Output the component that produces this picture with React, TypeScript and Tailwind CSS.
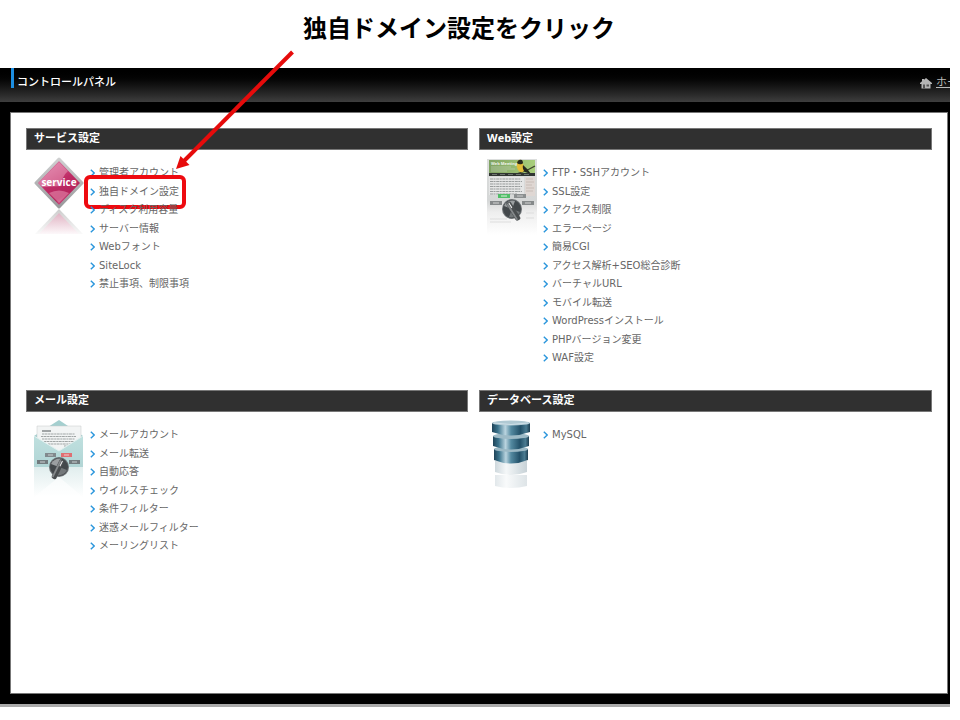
import React from 'react';

interface MenuSection {
  title: string;
  icon: React.ReactNode;
  items: string[];
  listHeight: string;
  highlighted?: string;
}

const Knob: React.FC<{ x: number; y: number; angle: number }> = ({ x, y, angle }) => (
  <g transform={`translate(${x} ${y})`}>
    <circle r="10" fill="#6b7073" />
    <circle r="9" fill="#43484b" />
    <path d="M-8 -3A9 9 0 0 1 3 -8L0 0Z" fill="#9b9fa1" />
    <path d="M8 3A9 9 0 0 1 -3 8L0 0Z" fill="#73787a" />
    <g transform={`rotate(${angle})`}>
      <rect x="-2.6" y="-8" width="5.2" height="21" rx="2" fill="#4a4e50" />
      <rect x="-2.2" y="-7" width="1.8" height="19" rx="0.9" fill="#85898b" />
      <path d="M0.5 -7V-1" stroke="#f3f3f3" strokeWidth="1" />
    </g>
  </g>
);

const ServiceIcon = () => (
  <svg className="block" width="50" height="80" viewBox="0 0 50 80" aria-hidden="true">
    <defs>
      <linearGradient id="svcPink" x1="0.2" y1="0.1" x2="0.7" y2="1">
        <stop offset="0" stopColor="#d8709c" />
        <stop offset="0.45" stopColor="#bf2c66" />
        <stop offset="0.75" stopColor="#b5245c" />
        <stop offset="1" stopColor="#dd6f9d" />
      </linearGradient>
      <linearGradient id="svcRim" x1="0" y1="0" x2="0" y2="1">
        <stop offset="0" stopColor="#cfd0d1" />
        <stop offset="1" stopColor="#98999b" />
      </linearGradient>
      <linearGradient id="svcFade" x1="0" y1="0" x2="0" y2="1">
        <stop offset="0" stopColor="#e0b3c3" />
        <stop offset="1" stopColor="#fdf8fa" />
      </linearGradient>
      <linearGradient id="svcRimFade" x1="0" y1="0" x2="0" y2="1">
        <stop offset="0" stopColor="#cccccc" />
        <stop offset="1" stopColor="#fafafa" />
      </linearGradient>
    </defs>
    <path d="M25 52L49 77H1Z" fill="url(#svcRimFade)" />
    <path d="M25 56L45 77H5Z" fill="url(#svcFade)" />
    <path d="M25 2L48 26L25 50L2 26Z" fill="url(#svcPink)" stroke="url(#svcRim)" strokeWidth="3" strokeLinejoin="round" />
    <path d="M25 5L34 14Q27 20 28 29L8 30L4 26Z" fill="#eda6c1" opacity="0.5" />
    <path d="M15 36L25 46L35 36Q25 31 15 36Z" fill="#f3aec8" opacity="0.45" />
    <text x="25" y="29" textAnchor="middle" fontFamily="Open Sans, sans-serif" fontSize="10" fontWeight="700" fill="#fff">service</text>
  </svg>
);

const WebIcon = () => (
  <svg className="block" width="50" height="80" viewBox="0 0 50 80" aria-hidden="true">
    <defs>
      <linearGradient id="webSheet" x1="0" y1="0" x2="0" y2="1">
        <stop offset="0" stopColor="#dcdedd" />
        <stop offset="0.55" stopColor="#d5d7d7" />
        <stop offset="0.7" stopColor="#eeeeee" />
        <stop offset="1" stopColor="#ffffff" />
      </linearGradient>
      <linearGradient id="webSky" x1="0" y1="0" x2="1" y2="0">
        <stop offset="0" stopColor="#7fa263" />
        <stop offset="1" stopColor="#a9cf7c" />
      </linearGradient>
    </defs>
    <rect x="0" y="2" width="50" height="76" fill="url(#webSheet)" />
    <rect x="2" y="3" width="46" height="14" fill="url(#webSky)" />
    <text x="4" y="8" fontFamily="Open Sans, sans-serif" fontSize="4" fontWeight="700" fill="#eff4ea">Web Meeting</text>
    <path d="M4 10H24M4 12H28M4 14H20" stroke="#b9ccab" strokeWidth="0.8" />
    <path d="M25 18Q36 16 48 9" fill="none" stroke="#40452d" strokeWidth="1.4" />
    <path d="M30 6Q31 2 34 3Q36 4 36 7Q39 11 37 14Q34 17 31 13Q29 10 30 6Z" fill="#e2bd3a" />
    <path d="M30 6Q31 2 35 3Q37 6 35 7Q32 8 30 6ZM36 8Q41 12 44 17L38 15Q35 12 36 8Z" fill="#26291f" />
    <rect x="2" y="16" width="46" height="3" fill="#303532" />
    <path d="M5 17.5H45" stroke="#8a908b" strokeWidth="0.7" strokeDasharray="5 3" />
    <rect x="2" y="20" width="35" height="18" fill="#e5e6e6" />
    <rect x="38" y="20" width="10" height="19" fill="#dfd7d3" />
    <path d="M3 22H34M3 24.5H35M3 27H33M3 29.5H35M3 32H34M3 34.5H35M3 37H30" stroke="#999d9d" strokeWidth="1" strokeDasharray="3 0.5 2 0.7" />
    <path d="M39 22H46M39 25H47M39 28H45M39 31H47M39 34H46" stroke="#c2b6b1" strokeWidth="0.8" />
    <rect x="11" y="37" width="12" height="4" fill="#50bd67" />
    <path d="M14 39H20" stroke="#dbf3df" />
    <rect x="27" y="37" width="12" height="4" fill="#8b8f90" />
    <path d="M30 39H36" stroke="#c9cbcb" />
    <rect x="3" y="44" width="12" height="4" fill="#85898a" />
    <path d="M6 46H12" stroke="#d3d4d4" />
    <rect x="35" y="44" width="12" height="4" fill="#85898a" />
    <path d="M38 46H44" stroke="#d3d4d4" />
    <path d="M3 62H20M3 65H24M39 56H47M39 61H47" stroke="#dddddd" />
    <Knob x={25} y={52} angle={-32} />
  </svg>
);

const MailIcon = () => (
  <svg className="block" width="50" height="80" viewBox="0 0 50 80" aria-hidden="true">
    <defs>
      <linearGradient id="mailFade" x1="0" y1="0" x2="0" y2="1">
        <stop offset="0" stopColor="#e1eeee" />
        <stop offset="1" stopColor="#ffffff" />
      </linearGradient>
      <linearGradient id="mailBody" x1="0" y1="0" x2="0" y2="1">
        <stop offset="0" stopColor="#bfe0df" />
        <stop offset="1" stopColor="#b1d5d5" />
      </linearGradient>
    </defs>
    <rect x="0" y="48" width="49" height="30" fill="url(#mailFade)" />
    <path d="M0 78L25 58L49 78" fill="#ffffff" opacity="0.6" />
    <path d="M0 17L25 1L49 17V48H0Z" fill="#a4cfcf" />
    <path d="M3 7H47V24L25 34L3 24Z" fill="#f2f4f4" stroke="#c6caca" strokeWidth="0.5" />
    <path d="M8 12H17" stroke="#4e5456" />
    <path d="M8 15H41M7 17.5H42M8 20H41M10 22.5H40M14 25H38M30 27H35" stroke="#a0a5a5" strokeWidth="1.1" strokeDasharray="2 0.5 3 0.6" />
    <path d="M0 17L25 32L49 17V48H0Z" fill="url(#mailBody)" />
    <path d="M0 17L25 32L49 17" fill="none" stroke="#e1f0ef" strokeWidth="1" />
    <rect x="11" y="34" width="11" height="4" fill="#818a8d" />
    <path d="M14 36H19" stroke="#cbd0d1" />
    <rect x="27" y="34" width="11" height="4" fill="#df6f72" />
    <path d="M30 36H35" stroke="#f4cccc" />
    <rect x="3" y="41" width="11" height="4" fill="#727b7e" />
    <path d="M6 43H11" stroke="#cbd0d1" />
    <rect x="35" y="41" width="11" height="4" fill="#727b7e" />
    <path d="M38 43H43" stroke="#cbd0d1" />
    <Knob x={25} y={48} angle={26} />
  </svg>
);

const DatabaseIcon = () => (
  <svg className="block" width="50" height="80" viewBox="0 0 50 80" aria-hidden="true">
    <defs>
      <linearGradient id="dbSide" x1="0" y1="0" x2="1" y2="0">
        <stop offset="0" stopColor="#1f4358" />
        <stop offset="0.15" stopColor="#39728b" />
        <stop offset="0.35" stopColor="#bad4df" />
        <stop offset="0.5" stopColor="#548aa1" />
        <stop offset="0.75" stopColor="#235169" />
        <stop offset="0.9" stopColor="#4a7b91" />
        <stop offset="1" stopColor="#1d3e51" />
      </linearGradient>
      <linearGradient id="dbFaded" x1="0" y1="0" x2="1" y2="0">
        <stop offset="0" stopColor="#ced8dd" />
        <stop offset="0.35" stopColor="#f4f7f8" />
        <stop offset="0.8" stopColor="#d4dde1" />
        <stop offset="1" stopColor="#c8d2d7" />
      </linearGradient>
    </defs>
    <path d="M8 56V67Q24 71 40 67V56Z" fill="url(#dbFaded)" opacity="0.6" />
    <path d="M8 42V53Q24 59 40 53V42Z" fill="url(#dbFaded)" />
    <path d="M7 30V41Q24 48 41 41V30Z" fill="url(#dbSide)" />
    <ellipse cx="24" cy="30" rx="17" ry="3" fill="#9cb9c5" />
    <path d="M6 17V27Q24 34 42 27V17Z" fill="url(#dbSide)" />
    <ellipse cx="24" cy="17" rx="18" ry="3" fill="#9ebbc7" />
    <path d="M5 4V13Q24 20 43 13V4Z" fill="url(#dbSide)" />
    <ellipse cx="24" cy="4" rx="19" ry="2.5" fill="#b0c9d3" />
    <path d="M7 4Q24 7 41 4" fill="none" stroke="#ddeaf0" strokeWidth="0.7" />
  </svg>
);

const sections: MenuSection[] = [
  {
    title: 'サービス設定',
    icon: <ServiceIcon />,
    items: ['管理者アカウント', '独自ドメイン設定', 'ディスク利用容量', 'サーバー情報', 'Webフォント', 'SiteLock', '禁止事項、制限事項'],
    listHeight: 'h-[129px]',
    highlighted: '独自ドメイン設定',
  },
  {
    title: 'Web設定',
    icon: <WebIcon />,
    items: [
      'FTP・SSHアカウント',
      'SSL設定',
      'アクセス制限',
      'エラーページ',
      '簡易CGI',
      'アクセス解析+SEO総合診断',
      'バーチャルURL',
      'モバイル転送',
      'WordPressインストール',
      'PHPバージョン変更',
      'WAF設定',
    ],
    listHeight: 'h-[203px]',
  },
  {
    title: 'メール設定',
    icon: <MailIcon />,
    items: ['メールアカウント', 'メール転送', '自動応答', 'ウイルスチェック', '条件フィルター', '迷惑メールフィルター', 'メーリングリスト'],
    listHeight: 'h-[129px]',
  },
  {
    title: 'データベース設定',
    icon: <DatabaseIcon />,
    items: ['MySQL'],
    listHeight: 'h-[18px]',
  },
];

const SectionPanel: React.FC<{ section: MenuSection }> = ({ section }) => (
  <section>
    <h2 className="h-[22px] border border-[#777] bg-[#303030] pl-[7px] font-['Open_Sans','Noto_Sans_CJK_JP',sans-serif] text-[11px] leading-[18px] font-bold text-white">
      {section.title}
    </h2>
    <div className="flex gap-[6px] pt-[7px] pl-2">
      <div className="w-[50px] shrink-0">{section.icon}</div>
      <ul className={`mt-[7px] flex flex-col justify-between ${section.listHeight}`}>
        {section.items.map((item) => (
          <li key={item} className="relative">
            <a href="#" className="flex items-center gap-1 text-[10px] leading-[18px] whitespace-nowrap text-[#666]">
              <svg width="5" height="8" viewBox="0 0 5 8" aria-hidden="true">
                <path d="M0.8 0.8L4.2 4L0.8 7.2" fill="none" stroke="#2a96dc" strokeWidth="1.4" />
              </svg>
              {item}
            </a>
            {section.highlighted === item && (
              <span className="pointer-events-none absolute -top-2 -left-[6px] h-[34px] w-[102px] rounded-md border-4 border-[#ee0a10]" />
            )}
          </li>
        ))}
      </ul>
    </div>
  </section>
);

export default function App() {
  return (
    <div className="relative min-h-screen overflow-hidden bg-white font-['DejaVu_Sans','Noto_Sans_CJK_JP',sans-serif]">
      <p className="flex h-[68px] items-center justify-center pr-[42px] pb-[10px] text-2xl font-bold text-black">
        独自ドメイン設定をクリック
      </p>

      <div className="mr-[10px] border-b-3 border-[#aaa] bg-black pb-[10px]">
        <header className="flex h-[34px] items-start justify-between overflow-hidden bg-linear-to-b from-black to-[#3e3e3e] pl-[11px]">
          <h1 className="flex items-start gap-[3px] text-[11px] leading-[30px] font-medium text-white">
            <span className="h-5 w-[3px] bg-[#1c8fe3]" />
            コントロールパネル
          </h1>
          <a href="#" className="flex w-[30px] items-center gap-1 overflow-hidden text-[11px] leading-[30px] whitespace-nowrap text-[#bbb]">
            <svg className="shrink-0" width="12" height="11" viewBox="0 0 12 11" aria-hidden="true">
              <path d="M6 0L12 5V6H10.500V10.500H1.500V6H0V5L2 3.300V1H4V1.700Z" fill="#b5b5b5" />
              <path d="M3 6.500H5V10.500H3ZM6.500 6.500H9V8.500H6.500Z" fill="#555" />
            </svg>
            <span className="underline">ホーム</span>
          </a>
        </header>

        <main className="mt-[10px] mr-[2px] ml-[10px] grid min-h-[582px] grid-cols-[442fr_453fr] grid-rows-[262px_1fr] gap-x-[11px] border border-[#777] bg-white pt-[15px] pr-[15px] pl-[15px]">
          {sections.map((section) => (
            <SectionPanel key={section.title} section={section} />
          ))}
        </main>
      </div>

      {/* callout arrow pointing at the domain settings link */}
      <svg className="pointer-events-none absolute top-0 left-0" width="320" height="180" viewBox="0 0 320 180" aria-hidden="true">
        <path d="M292.500 52L184 161" stroke="#e60b0b" strokeWidth="4" />
        <path d="M176 169L180.500 156L189.500 165Z" fill="#e60b0b" />
      </svg>
    </div>
  );
}
